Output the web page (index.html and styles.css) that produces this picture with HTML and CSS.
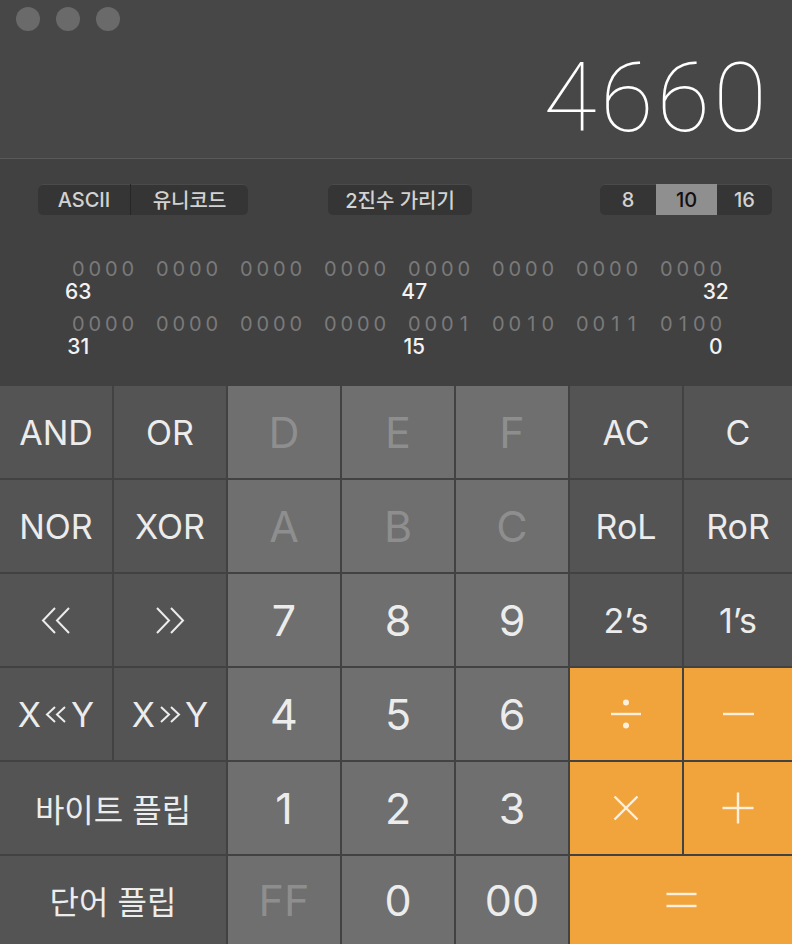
FILE: index.html
```html
<!DOCTYPE html>
<html lang="ko">
<head>
<meta charset="utf-8">
<title>계산기</title>
<link rel="stylesheet" href="styles.css">
</head>
<body>
<div class="window">
  <div class="titlebar">
    <span class="light"></span><span class="light"></span><span class="light"></span>
  </div>
  <div class="display"><span class="value">4660</span></div>
  <div class="panel">
    <div class="controls">
      <div class="seg">
        <span class="seg-item w-ascii">ASCII</span>
        <span class="seg-item w-uni divided">유니코드</span>
      </div>
      <div class="seg mid">
        <span class="seg-item w-hide">2진수 가리기</span>
      </div>
      <div class="seg right">
        <span class="seg-item w-8">8</span>
        <span class="seg-item w-10 selected">10</span>
        <span class="seg-item w-16">16</span>
      </div>
    </div>
    <div class="bits">
      <div class="bitrow">
        <span class="grp"><i>0</i><i>0</i><i>0</i><i>0</i></span>
        <span class="grp"><i>0</i><i>0</i><i>0</i><i>0</i></span>
        <span class="grp"><i>0</i><i>0</i><i>0</i><i>0</i></span>
        <span class="grp"><i>0</i><i>0</i><i>0</i><i>0</i></span>
        <span class="grp"><i>0</i><i>0</i><i>0</i><i>0</i></span>
        <span class="grp"><i>0</i><i>0</i><i>0</i><i>0</i></span>
        <span class="grp"><i>0</i><i>0</i><i>0</i><i>0</i></span>
        <span class="grp"><i>0</i><i>0</i><i>0</i><i>0</i></span>
      </div>
      <div class="labelrow">
        <span class="grp"><i>63</i><i></i><i></i><i></i></span>
        <span class="grp"><i></i><i></i><i></i><i></i></span>
        <span class="grp"><i></i><i></i><i></i><i></i></span>
        <span class="grp"><i></i><i></i><i></i><i></i></span>
        <span class="grp"><i>47</i><i></i><i></i><i></i></span>
        <span class="grp"><i></i><i></i><i></i><i></i></span>
        <span class="grp"><i></i><i></i><i></i><i></i></span>
        <span class="grp"><i></i><i></i><i></i><i>32</i></span>
      </div>
      <div class="bitrow second">
        <span class="grp"><i>0</i><i>0</i><i>0</i><i>0</i></span>
        <span class="grp"><i>0</i><i>0</i><i>0</i><i>0</i></span>
        <span class="grp"><i>0</i><i>0</i><i>0</i><i>0</i></span>
        <span class="grp"><i>0</i><i>0</i><i>0</i><i>0</i></span>
        <span class="grp"><i>0</i><i>0</i><i>0</i><i>1</i></span>
        <span class="grp"><i>0</i><i>0</i><i>1</i><i>0</i></span>
        <span class="grp"><i>0</i><i>0</i><i>1</i><i>1</i></span>
        <span class="grp"><i>0</i><i>1</i><i>0</i><i>0</i></span>
      </div>
      <div class="labelrow">
        <span class="grp"><i>31</i><i></i><i></i><i></i></span>
        <span class="grp"><i></i><i></i><i></i><i></i></span>
        <span class="grp"><i></i><i></i><i></i><i></i></span>
        <span class="grp"><i></i><i></i><i></i><i></i></span>
        <span class="grp"><i>15</i><i></i><i></i><i></i></span>
        <span class="grp"><i></i><i></i><i></i><i></i></span>
        <span class="grp"><i></i><i></i><i></i><i></i></span>
        <span class="grp"><i></i><i></i><i></i><i>0</i></span>
      </div>
    </div>
  </div>
  <div class="keys">
    <div class="k dark txt">AND</div>
    <div class="k dark txt">OR</div>
    <div class="k light num off">D</div>
    <div class="k light num off">E</div>
    <div class="k light num off">F</div>
    <div class="k dark txt">AC</div>
    <div class="k dark txt">C</div>

    <div class="k dark txt">NOR</div>
    <div class="k dark txt">XOR</div>
    <div class="k light num off">A</div>
    <div class="k light num off">B</div>
    <div class="k light num off">C</div>
    <div class="k dark txt">RoL</div>
    <div class="k dark txt">RoR</div>

    <div class="k dark"><svg class="chev2" width="30" height="27" viewBox="0 0 30 27"><polyline points="14,1 2,13.5 14,26" /><polyline points="28,1 16,13.5 28,26" /></svg></div>
    <div class="k dark"><svg class="chev2" width="30" height="27" viewBox="0 0 30 27"><polyline points="2,1 14,13.5 2,26" /><polyline points="16,1 28,13.5 16,26" /></svg></div>
    <div class="k light num">7</div>
    <div class="k light num">8</div>
    <div class="k light num">9</div>
    <div class="k dark txt">2’s</div>
    <div class="k dark txt">1’s</div>

    <div class="k dark txt shift"><span>X</span><svg class="chev1" width="22" height="17" viewBox="0 0 22 17"><polyline points="10,1 2,8.5 10,16" /><polyline points="20,1 12,8.5 20,16" /></svg><span>Y</span></div>
    <div class="k dark txt shift"><span>X</span><svg class="chev1" width="22" height="17" viewBox="0 0 22 17"><polyline points="2,1 10,8.5 2,16" /><polyline points="12,1 20,8.5 12,16" /></svg><span>Y</span></div>
    <div class="k light num">4</div>
    <div class="k light num">5</div>
    <div class="k light num">6</div>
    <div class="k op"><svg width="32" height="30" viewBox="0 0 32 30"><line x1="1" y1="15" x2="31" y2="15" /><circle cx="16" cy="3.5" r="3" /><circle cx="16" cy="26.5" r="3" /></svg></div>
    <div class="k op"><svg width="32" height="4" viewBox="0 0 32 4"><line x1="1" y1="2" x2="32" y2="2" /></svg></div>

    <div class="k dark ko span2">바이트 플립</div>
    <div class="k light num">1</div>
    <div class="k light num">2</div>
    <div class="k light num">3</div>
    <div class="k op"><svg width="26" height="26" viewBox="0 0 26 26"><line x1="1.5" y1="1.5" x2="24.5" y2="24.5" /><line x1="24.5" y1="1.5" x2="1.5" y2="24.5" /></svg></div>
    <div class="k op"><svg width="32" height="32" viewBox="0 0 32 32"><line x1="0.5" y1="16" x2="31.5" y2="16" /><line x1="16" y1="0.5" x2="16" y2="31.5" /></svg></div>

    <div class="k dark ko span2">단어 플립</div>
    <div class="k light num off">FF</div>
    <div class="k light num">0</div>
    <div class="k light num">00</div>
    <div class="k op span2"><svg width="31" height="16" viewBox="0 0 31 16"><line x1="0.5" y1="2" x2="30.5" y2="2" /><line x1="0.5" y1="14" x2="30.5" y2="14" /></svg></div>
  </div>
</div>
</body>
</html>
```

FILE: styles.css
```css
* { box-sizing: border-box; }

html, body {
  margin: 0;
  padding: 0;
  background: #474747;
}

body {
  width: 792px;
  height: 944px;
  overflow: hidden;
  font-family: Inter, "Noto Sans CJK KR", sans-serif;
}

.window {
  display: flex;
  flex-direction: column;
  width: 792px;
  height: 944px;
  background: #474747;
}

.titlebar {
  height: 36px;
  display: flex;
  align-items: center;
  gap: 16px;
  padding-left: 16px;
  padding-top: 1px;
}

.light {
  width: 24px;
  height: 24px;
  border-radius: 50%;
  background: #6a6a6a;
}

.display {
  height: 123px;
  display: flex;
  justify-content: flex-end;
  align-items: flex-start;
  padding-right: 25px;
  padding-top: 14px;
  border-bottom: 1px solid #595959;
}

.value {
  font-family: Roboto, Inter, sans-serif;
  font-weight: 100;
  font-size: 97px;
  line-height: 96px;
  letter-spacing: 3.5px;
  margin-right: -3px;
  color: #ffffff;
}

.panel {
  height: 227px;
  background: #414141;
  padding-top: 25px;
}

.controls {
  display: flex;
  align-items: center;
  padding-left: 38px;
  padding-right: 20px;
}

.seg {
  display: flex;
  height: 31px;
  background: #353535;
  border-radius: 5px;
  overflow: hidden;
  box-shadow: inset 0 1px 0 #4a4a4a;
}

.seg.mid { margin-left: 80px; }
.seg.right { margin-left: auto; }

.seg-item {
  display: flex;
  align-items: center;
  justify-content: center;
  font-size: 20px;
  font-weight: 500;
  color: #d2d2d2;
  height: 31px;
}

.seg-item.divided { border-left: 1px solid #262626; }
.seg-item.selected { background: #8f8f8f; color: #111; }

.w-ascii { width: 92px; }
.w-uni { width: 118px; }
.w-hide { width: 144px; }
.w-8 { width: 56px; }
.w-10 { width: 61px; }
.w-16 { width: 55px; }

.bits {
  margin-top: 44px;
  padding-left: 70px;
}

.bitrow, .labelrow {
  display: flex;
  gap: 18px;
}

.bitrow.second { margin-top: 12px; }

.grp { display: flex; }

.grp i {
  font-style: normal;
  width: 16.5px;
  display: flex;
  justify-content: center;
  white-space: nowrap;
}

.bitrow .grp i {
  font-size: 20px;
  line-height: 20px;
  font-weight: 400;
  color: #7a7a7a;
}

.labelrow { margin-top: 2px; }

.labelrow .grp i {
  font-size: 21px;
  line-height: 21px;
  font-weight: 500;
  color: #f2f2f2;
  height: 21px;
}

.keys {
  flex: 1;
  display: grid;
  grid-template-columns: repeat(6, 112px) 1fr;
  grid-template-rows: repeat(5, 92px) 1fr;
  gap: 2px;
  background: #424242;
}

.k {
  display: flex;
  align-items: center;
  justify-content: center;
  color: #ececec;
}

.dark { background: #545454; }
.k.light { background: #6f6f6f; width: auto; height: auto; border-radius: 0; }
.op { background: #f1a33c; }

.txt { font-size: 34px; }
.num { font-size: 43px; }
.ko { font-size: 32px; }
.off { color: #8e8e8e; }

.span2 { grid-column: span 2; }

.shift { gap: 4px; }

svg polyline, svg line {
  fill: none;
  stroke: #ececec;
  stroke-width: 2;
  stroke-linecap: butt;
}

.op svg line { stroke: #fcefdc; stroke-width: 2.4; }
.op svg circle { fill: #fcefdc; }
```
